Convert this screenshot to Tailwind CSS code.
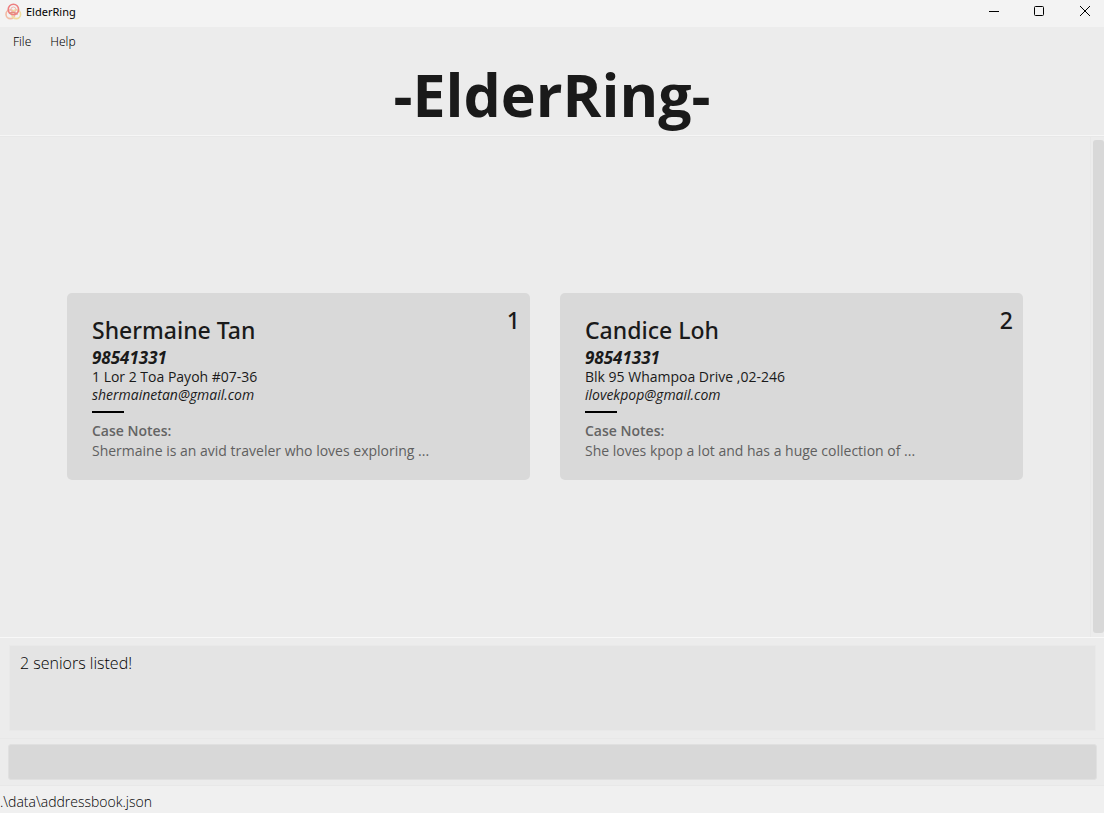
<!DOCTYPE html>
<html lang="en">
<head>
<meta charset="utf-8">
<meta name="viewport" content="width=device-width, initial-scale=1">
<title>ElderRing</title>
<script src="https://cdn.jsdelivr.net/npm/@tailwindcss/browser@4"></script>
</head>
<body class="flex h-screen flex-col bg-[#ececec] font-['Open_Sans','Noto_Sans',sans-serif] text-[#1a1a1a]">
<header class="flex h-[27px] shrink-0 items-center justify-between bg-[#f3f3f3] text-black">
  <div class="flex items-center gap-1 pb-1 pl-[5px] font-['Noto_Sans',sans-serif] text-[11px] leading-4">
    <svg class="h-[17px] w-[17px]" viewBox="0 0 17 17" fill="none" stroke-width="1.6" aria-hidden="true">
      <circle cx="5.4" cy="11.200" r="4.400" stroke="#f3bba4"/>
      <circle cx="11.200" cy="11.200" r="4.400" stroke="#f0dc9c"/>
      <circle cx="8.400" cy="6.400" r="5.200" stroke="#ee7f80"/>
      <circle cx="8.400" cy="6.600" r="2.600" stroke="#f1b3ac" stroke-width="1"/>
      <path d="M4 10.500c2.500-1.500 6-1.500 8.500 1" stroke="#e58a80" stroke-width="1.200"/>
    </svg>
    <span>ElderRing</span>
  </div>
  <div class="flex pb-1">
    <button aria-label="Minimize" class="flex h-[23px] w-[45px] items-center justify-center"><svg width="11" height="11" viewBox="0 0 11 11" stroke="currentColor"><path d="M0 5.500h10"/></svg></button>
    <button aria-label="Maximize" class="flex h-[23px] w-[45px] items-center justify-center"><svg width="11" height="11" viewBox="0 0 11 11" fill="none" stroke="currentColor"><rect x=".5" y=".5" width="9" height="9" rx="1"/></svg></button>
    <button aria-label="Close" class="flex h-[23px] w-[42px] items-center justify-end pr-[13px]"><svg width="11" height="11" viewBox="0 0 11 11" fill="none" stroke="currentColor"><path d="M0 0l10 10M10 0L0 10"/></svg></button>
  </div>
</header>
<nav class="flex h-[29px] shrink-0 items-center gap-[19px] pl-[13px] font-['Noto_Sans',sans-serif] text-xs font-light text-black">
  <button>File</button>
  <button>Help</button>
</nav>
<h1 class="h-20 shrink-0 border-b border-[#f6f6f6] text-center text-[59px] leading-[77px] font-bold">-ElderRing-</h1>
<main class="flex min-h-0 flex-1 border-t border-[#e8e8e8]">
  <div class="grid flex-1 grid-cols-2 content-center gap-[30px] border-r border-[#e8e8e8] px-[67px] pb-[2px]">
    <article class="flex h-[187px] justify-between rounded-[5px] bg-[#d9d9d9] pt-[10px] pr-[10px] pl-[25px]">
      <div class="pt-[11px]">
        <h2 class="font-['Noto_Sans',sans-serif] text-[23px] leading-8 font-medium">Shermaine Tan</h2>
        <p class="text-[17px] leading-[23px] font-bold italic">98541331</p>
        <p class="text-sm leading-4">1 Lor 2 Toa Payoh #07-36</p>
        <p class="text-sm leading-5 italic">shermainetan@gmail.com</p>
        <hr class="mt-1.5 mb-2 w-8 border-t-2 border-black">
        <h3 class="text-sm leading-5 font-semibold text-[#646464]">Case Notes:</h3>
        <p class="text-sm leading-5 text-[#5f5f5f]">Shermaine is an avid traveler who loves exploring ...</p>
      </div>
      <span class="font-['Noto_Sans',sans-serif] text-[23px] leading-[34px] font-medium">1</span>
    </article>
    <article class="flex h-[187px] justify-between rounded-[5px] bg-[#d9d9d9] pt-[10px] pr-[10px] pl-[25px]">
      <div class="pt-[11px]">
        <h2 class="font-['Noto_Sans',sans-serif] text-[23px] leading-8 font-medium">Candice Loh</h2>
        <p class="text-[17px] leading-[23px] font-bold italic">98541331</p>
        <p class="text-sm leading-4">Blk 95 Whampoa Drive ,02-246</p>
        <p class="text-sm leading-5 italic">ilovekpop@gmail.com</p>
        <hr class="mt-1.5 mb-2 w-8 border-t-2 border-black">
        <h3 class="text-sm leading-5 font-semibold text-[#646464]">Case Notes:</h3>
        <p class="text-sm leading-5 text-[#5f5f5f]">She loves kpop a lot and has a huge collection of ...</p>
      </div>
      <span class="font-['Noto_Sans',sans-serif] text-[23px] leading-[34px] font-medium">2</span>
    </article>
  </div>
  <div class="w-[13px] pt-[3px] pb-1 pl-[2px]"><div class="h-full rounded-[3px] bg-[#d8d8d8]"></div></div>
</main>
<section class="shrink-0 border-t border-[#f8f8f8] pt-[7px] pr-2 pb-[7px] pl-[9px]">
  <textarea readonly aria-label="Result" class="block h-[86px] w-full resize-none border border-[#e9e9e9] bg-[#e4e4e4] px-[10px] py-[5px] text-base leading-6 font-light text-black outline-none">2 seniors listed!</textarea>
</section>
<div class="shrink-0 border-y border-[#e8e8e8] py-[5px] pr-[7px] pl-2">
  <input aria-label="Command" class="block h-9 w-full rounded-[3px] border border-[#e0e0e0] bg-[#d8d8d8] px-2 outline-none">
</div>
<footer class="h-[27px] shrink-0 bg-[#f0f0f0] pt-[6px] text-sm leading-5 font-light text-black">.\data\addressbook.json</footer>
</body>
</html>
